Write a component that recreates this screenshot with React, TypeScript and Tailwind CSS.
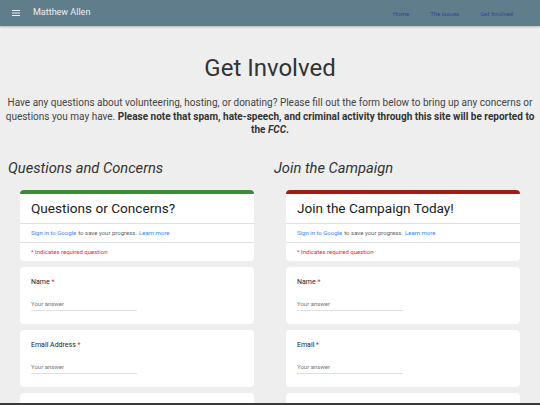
import React from 'react'

function SignInRows() {
  return (
    <>
      <div className="border-t border-[#e0e0e0] px-[11px] h-[19px] flex items-center text-[6px] text-[#5f6368]">
        <span className="text-[#4285f4]">Sign in to Google</span>
        <span className="ml-[2px]">to save your progress.</span>
        <span className="ml-[2px] text-[#4285f4]">Learn more</span>
      </div>
      <div className="border-t border-[#e0e0e0] px-[11px] h-[19px] flex items-center text-[6px] text-[#d93025]">
        * Indicates required question
      </div>
    </>
  )
}

function FieldCard({ label }: { label: string }) {
  return (
    <div className="bg-white rounded-[4px] h-[57px] px-[11px] pt-[10px]">
      <div className="text-[7px] text-[#202124] leading-[10px]">
        {label} <span className="text-[#d93025]">*</span>
      </div>
      <div className="mt-[13px] w-[106px] border-b border-[#e0e0e0] pb-[2px] text-[6px] text-[#70757a] leading-[8px]">
        Your answer
      </div>
    </div>
  )
}

function FormColumn({
  heading,
  title,
  accent,
  fields,
}: {
  heading: string
  title: string
  accent: string
  fields: string[]
}) {
  return (
    <div className="flex flex-col">
      <h2 className="italic text-[14.7px] leading-[20px] text-[#333] h-[20px]">{heading}</h2>
      <div className="mx-[12px] mt-[12px] flex flex-col gap-[6px]">
        <div className={`bg-white rounded-[4px] border-t-[4px] ${accent}`}>
          <div className="px-[11px] h-[29px] flex items-center text-[13.6px] text-[#202124]">{title}</div>
          <SignInRows />
        </div>
        {fields.map((f) => (
          <FieldCard key={f} label={f} />
        ))}
        <div className="bg-white rounded-t-[4px] h-[20px]" />
      </div>
    </div>
  )
}

export default function App() {
  return (
    <div
      className="w-[540px] h-[405px] overflow-hidden bg-[#eeeeee] flex flex-col"
      style={{ fontFamily: 'Roboto, "Noto Sans", sans-serif' }}
    >
      {/* Header */}
      <header className="h-[26px] shrink-0 bg-[#607d8b] flex items-center shadow-[0_1px_2px_rgba(0,0,0,0.25)] relative z-10">
        <svg width="8" height="6" viewBox="0 0 8 6" className="ml-[12px]">
          <rect x="0" y="0" width="8" height="1" fill="#eceff1" />
          <rect x="0" y="2.5" width="8" height="1" fill="#eceff1" />
          <rect x="0" y="5" width="8" height="1" fill="#eceff1" />
        </svg>
        <span className="ml-[13px] text-[9px] text-[#eceff1]">Matthew Allen</span>
        <nav className="ml-auto mr-[27px] flex gap-[21px] text-[6px] text-[#34469a]">
          <a>Home</a>
          <a>The Issues</a>
          <a>Get Involved</a>
        </nav>
      </header>

      {/* Intro */}
      <div className="flex-1 overflow-hidden">
        <h1 className="text-center text-[24px] leading-[30px] text-[#333] mt-[27px]">Get Involved</h1>
        <p className="mt-[13px] px-[4px] text-center text-[10px] leading-[13.5px] text-[#444]">
          Have any questions about volunteering, hosting, or donating? Please fill out the form below to bring up any
          concerns or questions you may have.{' '}
          <b className="text-[#333]">
            Please note that spam, hate-speech, and criminal activity through this site will be reported to the{' '}
            <i>FCC</i>.
          </b>
        </p>

        <div className="mt-[21px] grid grid-cols-2 gap-[8px] px-[8px]">
          <FormColumn
            heading="Questions and Concerns"
            title="Questions or Concerns?"
            accent="border-[#3d8b37]"
            fields={['Name', 'Email Address']}
          />
          <FormColumn
            heading="Join the Campaign"
            title="Join the Campaign Today!"
            accent="border-[#a01c14]"
            fields={['Name', 'Email']}
          />
        </div>
      </div>

      <footer className="h-[2px] shrink-0 bg-[#3a3a3a]" />
    </div>
  )
}
